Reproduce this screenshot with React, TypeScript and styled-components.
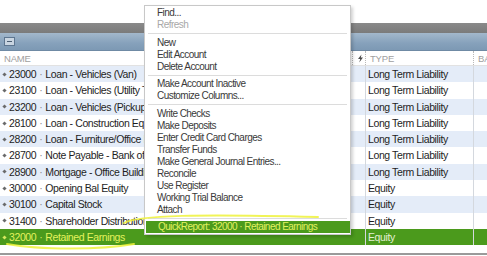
import React from 'react';
import styled, {createGlobalStyle} from 'styled-components';

const GlobalStyle = createGlobalStyle`
  html, body {
    margin: 0;
    padding: 0;
    background: #fff;
    overflow: hidden;
  }
  body {
    font-family: 'Liberation Sans', Arial, sans-serif;
  }
`;

const Page = styled.div`
  position: relative;
  width: 487px;
  height: 256px;
  display: flex;
  flex-direction: column;
  background: #fff;
  overflow: hidden;
`;

const TopSpace = styled.div`
  height: 23px;
  flex: none;
`;

const TitleBar = styled.div`
  height: 10px;
  flex: none;
  background: linear-gradient(#8a8a8a, #7b7b7b);
`;

const ToolBar = styled.div`
  height: 18px;
  flex: none;
  display: flex;
  align-items: center;
  padding-left: 4px;
  background: linear-gradient(#a3b8cc, #86a1bb 60%, #7d99b4);
  border-bottom: 1px solid #6f8aa4;
  box-sizing: border-box;
`;

const CollapseButton = styled.div`
  width: 9px;
  height: 7px;
  border: 1px solid #5e7690;
  background: #c9d5e1;
  display: flex;
  align-items: center;
  justify-content: center;

  &::after {
    content: '';
    width: 5px;
    height: 1px;
    background: #4b5e72;
  }
`;

const Grid = styled.div<{$bg?: string; $h: number}>`
  display: grid;
  grid-template-columns: 352px 13px 108px 1fr;
  height: ${(p) => p.$h}px;
  flex: none;
  background: ${(p) => p.$bg || '#fff'};
  font-size: 10.5px;
  letter-spacing: -0.4px;
  line-height: ${(p) => p.$h}px;
  white-space: nowrap;
`;

const HeaderGrid = styled(Grid)`
  border-bottom: 1px solid #e2e2e2;
  box-sizing: border-box;
`;

const HeadCell = styled.div<{$sep?: boolean}>`
  color: #a0a0a0;
  font-size: 9.5px;
  letter-spacing: -0.2px;
  padding-left: 4px;
  border-left: ${(p) => (p.$sep ? '1px dotted #b8b8b8' : 'none')};
  overflow: hidden;
  display: flex;
  align-items: center;
`;

const Cell = styled.div<{$color?: string; $line?: boolean}>`
  color: ${(p) => p.$color || '#1e1e1e'};
  overflow: hidden;
  padding-left: 2px;
  border-left: ${(p) => (p.$line ? '1px solid #d4d8de' : 'none')};
  display: flex;
  align-items: center;
`;

const Bullet = styled.span<{$color?: string}>`
  display: inline-block;
  flex: none;
  width: 3px;
  height: 3px;
  margin: 0 3px 0 1px;
  background: ${(p) => p.$color || '#6a6a6a'};
  transform: rotate(45deg);
`;

const Dot = styled.span<{$color?: string}>`
  color: ${(p) => p.$color || '#8c8c8c'};
  margin: 0 3px;
`;

const Filler = styled.div`
  flex: 1;
`;

const BottomLine = styled.div`
  height: 2px;
  flex: none;
  margin-bottom: 1px;
  background: #9a9a9a;
`;

const Menu = styled.ul`
  position: absolute;
  left: 144px;
  top: 5px;
  width: 205px;
  margin: 0;
  padding: 1px 0;
  list-style: none;
  background: #fff;
  border: 1px solid #c8c8c8;
  box-shadow: 2px 2px 3px rgba(0, 0, 0, 0.18);
  font-family: 'Liberation Sans', Arial, sans-serif;
  font-size: 10px;
  letter-spacing: -0.55px;
`;

const MenuItem = styled.li<{$disabled?: boolean; $active?: boolean}>`
  height: 12px;
  line-height: 12px;
  padding-left: 12px;
  margin: ${(p) => (p.$active ? '0 0 0 1px' : '0')};
  color: ${(p) => (p.$disabled ? '#a8a8a8' : p.$active ? '#e2f160' : '#3a3a3a')};
  background: ${(p) => (p.$active ? '#4b9a1c' : 'transparent')};
  white-space: nowrap;
  overflow: hidden;
`;

const Separator = styled.li`
  height: 1px;
  margin: 2px 3px 2.5px 3px;
  background: #dcdcdc;
`;

const Marks = styled.svg`
  position: absolute;
  left: 0;
  top: 0;
  pointer-events: none;
`;

interface IAccount {
  num: string;
  name: string;
  type: string;
}

const accounts: IAccount[] = [
  {num: '23000', name: 'Loan - Vehicles (Van)', type: 'Long Term Liability'},
  {num: '23100', name: 'Loan - Vehicles (Utility Truck)', type: 'Long Term Liability'},
  {num: '23200', name: 'Loan - Vehicles (Pickup Truck)', type: 'Long Term Liability'},
  {num: '28100', name: 'Loan - Construction Equipment', type: 'Long Term Liability'},
  {num: '28200', name: 'Loan - Furniture/Office Equipment', type: 'Long Term Liability'},
  {num: '28700', name: 'Note Payable - Bank of Anycity', type: 'Long Term Liability'},
  {num: '28900', name: 'Mortgage - Office Building', type: 'Long Term Liability'},
  {num: '30000', name: 'Opening Bal Equity', type: 'Equity'},
  {num: '30100', name: 'Capital Stock', type: 'Equity'},
  {num: '31400', name: 'Shareholder Distributions', type: 'Equity'},
  {num: '32000', name: 'Retained Earnings', type: 'Equity'},
];

const menu: (string | null)[] = [
  'Find...',
  'Refresh',
  null,
  'New',
  'Edit Account',
  'Delete Account',
  null,
  'Make Account Inactive',
  'Customize Columns...',
  null,
  'Write Checks',
  'Make Deposits',
  'Enter Credit Card Charges',
  'Transfer Funds',
  'Make General Journal Entries...',
  'Reconcile',
  'Use Register',
  'Working Trial Balance',
  'Attach',
  null,
];

function BoltIcon() {
  return (
    <svg width="7" height="9" viewBox="0 0 7 9">
      <path d="M4.5 0.5 L1 5 H3.3 L2.2 8.5 L6 3.6 H3.8 Z" fill="#4a4a4a" />
    </svg>
  );
}

export default function App() {
  const selected = accounts.length - 1;
  return (
    <Page>
      <GlobalStyle />
      <TopSpace />
      <TitleBar />
      <ToolBar>
        <CollapseButton />
      </ToolBar>
      <HeaderGrid $h={15}>
        <HeadCell>NAME</HeadCell>
        <HeadCell $sep>
          <BoltIcon />
        </HeadCell>
        <HeadCell $sep>TYPE</HeadCell>
        <HeadCell $sep>BA</HeadCell>
      </HeaderGrid>
      {accounts.map((a, i) => {
        const isSel = i === selected;
        const bg = isSel ? '#4b9a1c' : i % 2 === 0 ? '#e4ecf8' : '#fff';
        return (
          <Grid key={a.num} $h={16.3} $bg={bg}>
            <Cell $color={isSel ? '#e4f25c' : undefined}>
              <Bullet $color={isSel ? '#d8e860' : undefined} />
              {a.num}
              <Dot $color={isSel ? '#d8e860' : undefined}>·</Dot>
              {a.name}
            </Cell>
            <Cell />
            <Cell $line $color={isSel ? '#e3f0d4' : undefined}>
              {a.type}
            </Cell>
            <Cell $line />
          </Grid>
        );
      })}
      <Filler />
      <BottomLine />

      <Menu>
        {menu.map((m, i) =>
          m === null ? (
            <Separator key={i} />
          ) : (
            <MenuItem key={i} $disabled={m === 'Refresh'}>
              {m}
            </MenuItem>
          ),
        )}
        <MenuItem $active>QuickReport: 32000 · Retained Earnings</MenuItem>
      </Menu>

      {/* highlighter pen marks on the screenshot */}
      <Marks width="487" height="256" viewBox="0 0 487 256">
        <path
          d="M124 223 C 138 215, 200 214, 318 217"
          stroke="#eef23a"
          strokeWidth="2"
          fill="none"
          strokeLinecap="round"
          opacity="0.85"
        />
        <path
          d="M7 244 C 40 250, 100 250, 134 244"
          stroke="#eef23a"
          strokeWidth="2"
          fill="none"
          strokeLinecap="round"
          opacity="0.85"
        />
      </Marks>
    </Page>
  );
}
